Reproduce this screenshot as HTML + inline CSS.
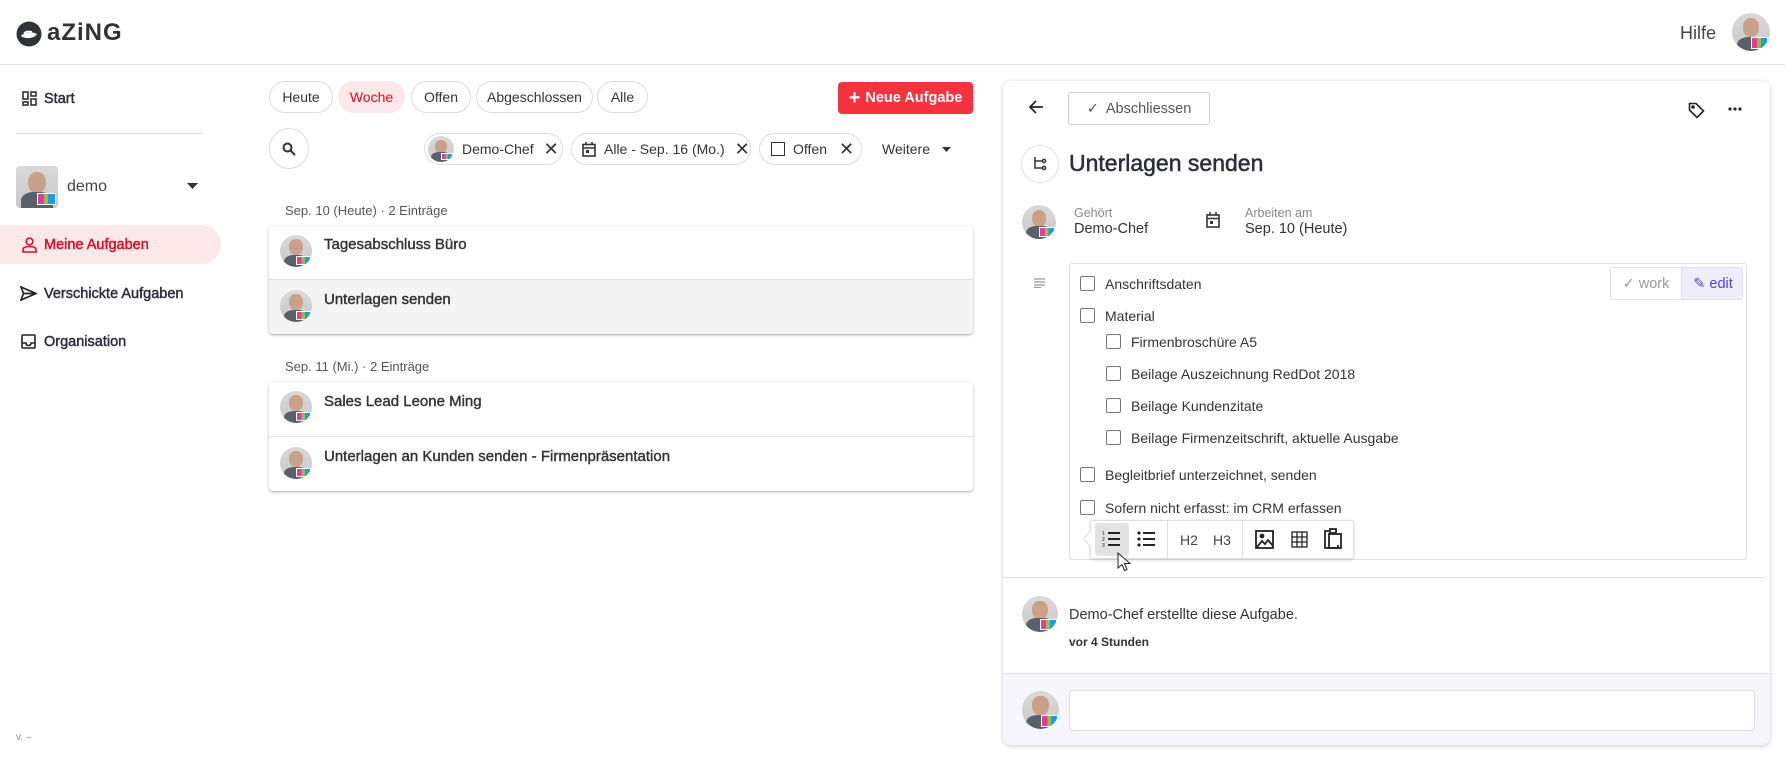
<!DOCTYPE html>
<html><head><meta charset="utf-8">
<style>
*{box-sizing:border-box;margin:0;padding:0}
body{width:1785px;height:757px;overflow:hidden;background:#fff;font-family:"Liberation Sans",sans-serif;color:#2b2d3b;position:relative}
.a{position:absolute}
.t{position:absolute;white-space:nowrap;line-height:1}
.chip{position:absolute;border:1px solid #dcdcdc;border-radius:16px;font-size:14px;display:flex;align-items:center;justify-content:center;color:#333;background:#fff}
.av{position:absolute;border-radius:50%;overflow:hidden;background:linear-gradient(180deg,#d9d9d9 0%,#c9c9c9 100%)}
.av:before{content:"";position:absolute;left:28%;top:14%;width:44%;height:50%;border-radius:45%;background:#c9a189}
.av:after{content:"";position:absolute;left:12%;top:62%;width:76%;height:50%;border-radius:40% 40% 0 0;background:#59606a}
.av i{position:absolute;right:4%;bottom:6%;width:45%;height:30%;background:linear-gradient(90deg,#e0408f 0 35%,#8bc34a 35% 60%,#2196f3 60%);z-index:2;border:1px solid #fff}
.cb{position:absolute;width:15px;height:15px;border:1.6px solid #777;border-radius:2px}
.it{position:absolute;font-size:14px;white-space:nowrap;line-height:1;color:#333}
.nav{position:absolute;font-size:14.5px;line-height:1;white-space:nowrap;color:#2b2d3b;-webkit-text-stroke:0.45px #2b2d3b}
.ttl{position:absolute;white-space:nowrap;line-height:1;font-size:15px;color:#333;-webkit-text-stroke:0.4px #333}
</style></head><body>

<!-- header -->
<svg class="a" style="left:16px;top:21px" width="26" height="26" viewBox="0 0 26 26"><circle cx="13" cy="13" r="12.5" fill="#2f3338"/><path d="M5 15c3-4 10-5 16-2c-2 4-11 6-16 2z" fill="#fff"/><path d="M8 12c2-2 6-2 8-1" stroke="#fff" stroke-width="1.5" fill="none"/></svg>
<div class="t" style="left:47px;top:21px;font-size:24px;font-weight:bold;color:#2f3338;letter-spacing:1px">aZiNG</div>
<div class="t" style="left:1680px;top:24px;font-size:18px;color:#444">Hilfe</div>
<div class="av" style="left:1732px;top:13px;width:38px;height:38px"><i></i></div>
<div class="a" style="left:0;top:64px;width:1785px;height:1px;background:#e2e2e2"></div>

<!-- sidebar -->
<svg class="a" style="left:22px;top:91px" width="15" height="15" viewBox="0 0 15 15" fill="none" stroke="#333" stroke-width="1.6"><rect x="1" y="1" width="5" height="7"/><rect x="9" y="1" width="5" height="4"/><rect x="1" y="11" width="5" height="3"/><rect x="9" y="8" width="5" height="6"/></svg>
<div class="nav" style="left:44px;top:92px">Start</div>
<div class="a" style="left:16px;top:133px;width:187px;height:1px;background:#ddd"></div>
<div class="a" style="left:16px;top:166px;width:42px;height:42px;background:#e8e4ef;border-radius:4px;overflow:hidden"><div class="av" style="left:0;top:0;width:42px;height:42px;border-radius:4px"><i></i></div></div>
<div class="t" style="left:67px;top:179px;font-size:16px;color:#444">demo</div>
<svg class="a" style="left:187px;top:183px" width="11" height="6"><path d="M0 0h11L5.5 6z" fill="#333"/></svg>
<div class="a" style="left:0;top:225px;width:221px;height:39px;background:#fde8e9;border-radius:0 20px 20px 0"></div>
<svg class="a" style="left:22px;top:237px" width="15" height="16" viewBox="0 0 15 16" fill="none" stroke="#d0112b" stroke-width="1.6"><circle cx="7.5" cy="4.5" r="3.3"/><path d="M1 15v-2c0-2.5 2-3.5 6.5-3.5s6.5 1 6.5 3.5v2z"/></svg>
<div class="nav" style="left:44px;top:238px;color:#d0112b;-webkit-text-stroke-color:#d0112b">Meine Aufgaben</div>
<svg class="a" style="left:20px;top:286px" width="17" height="15" viewBox="0 0 17 15" fill="none" stroke="#222" stroke-width="1.7"><path d="M1 1l15 6.5L1 14l2.5-6.5z M3.5 7.5H16"/></svg>
<div class="nav" style="left:44px;top:287px">Verschickte Aufgaben</div>
<svg class="a" style="left:21px;top:334px" width="15" height="15" viewBox="0 0 15 15" fill="none" stroke="#222" stroke-width="1.6"><rect x="1" y="1" width="13" height="13" rx="1"/><path d="M1 9h4c0 2 1 2.5 2.5 2.5S10 11 10 9h4"/></svg>
<div class="nav" style="left:44px;top:335px">Organisation</div>
<div class="t" style="left:16px;top:733px;font-size:10px;color:#888">v. –</div>

<!-- filter chips -->
<div class="chip" style="left:269px;top:81px;width:64px;height:32px">Heute</div>
<div class="chip" style="left:338px;top:81px;width:67px;height:32px;background:#fde8e9;border-color:#fde8e9;color:#d0112b">Woche</div>
<div class="chip" style="left:411px;top:81px;width:60px;height:32px">Offen</div>
<div class="chip" style="left:476px;top:81px;width:117px;height:32px">Abgeschlossen</div>
<div class="chip" style="left:597px;top:81px;width:51px;height:32px">Alle</div>
<div class="a" style="left:838px;top:82px;width:135px;height:32px;background:#f5333f;border-radius:4px;color:#fff;font-weight:bold;font-size:14.5px;display:flex;align-items:center;justify-content:center"><span style="font-size:20px;margin-right:5px;line-height:1">+</span>Neue Aufgabe</div>

<div class="chip" style="left:269px;top:128px;width:40px;height:41px;border-radius:50%"><svg width="14" height="14" viewBox="0 0 14 14" fill="none" stroke="#333" stroke-width="2"><circle cx="5.5" cy="5.5" r="4"/><path d="M8.5 8.5L13 13"/></svg></div>
<div class="chip" style="left:424px;top:133px;width:139px;height:32px;justify-content:flex-start;padding-left:3px"><div class="av" style="position:relative;width:26px;height:26px"><i></i></div><span style="margin-left:8px">Demo-Chef</span><span style="margin-left:10px;font-size:18px">✕</span></div>
<div class="chip" style="left:571px;top:133px;width:180px;height:32px;justify-content:flex-start;padding-left:10px"><svg width="14" height="15" viewBox="0 0 14 15" fill="none" stroke="#333" stroke-width="1.6"><rect x="1" y="2.5" width="12" height="11.5"/><path d="M1 6h12M4 0v3M10 0v3"/><rect x="4" y="8" width="3" height="3" fill="#333" stroke="none"/></svg><span style="margin-left:8px">Alle - Sep. 16 (Mo.)</span><span style="margin-left:10px;font-size:18px">✕</span></div>
<div class="chip" style="left:759px;top:133px;width:103px;height:32px;justify-content:flex-start;padding-left:11px"><span style="width:14px;height:14px;border:1.8px solid #333;display:inline-block"></span><span style="margin-left:8px">Offen</span><span style="margin-left:12px;font-size:18px">✕</span></div>
<div class="t" style="left:882px;top:142px;font-size:14px;color:#333">Weitere</div>
<svg class="a" style="left:942px;top:147px" width="9" height="5"><path d="M0 0h9L4.5 5z" fill="#333"/></svg>

<!-- lists -->
<div class="t" style="left:285px;top:204px;font-size:13px;color:#555">Sep. 10 (Heute) · 2 Einträge</div>
<div class="a" style="left:269px;top:226px;width:704px;height:108px;border-radius:4px;box-shadow:0 1px 3px rgba(0,0,0,.25),0 1px 1px rgba(0,0,0,.1);overflow:hidden;background:#fff">
 <div class="a" style="left:0;top:53px;width:704px;height:55px;background:#f4f4f4;border-top:1px solid #e0e0e0"></div>
</div>
<div class="av" style="left:280px;top:235px;width:32px;height:32px"><i></i></div>
<div class="ttl" style="left:324px;top:237px">Tagesabschluss Büro</div>
<div class="av" style="left:280px;top:290px;width:32px;height:32px"><i></i></div>
<div class="ttl" style="left:324px;top:292px">Unterlagen senden</div>

<div class="t" style="left:285px;top:360px;font-size:13px;color:#555">Sep. 11 (Mi.) · 2 Einträge</div>
<div class="a" style="left:269px;top:382px;width:704px;height:109px;border-radius:4px;box-shadow:0 1px 3px rgba(0,0,0,.25),0 1px 1px rgba(0,0,0,.1);background:#fff">
 <div class="a" style="left:0;top:54px;width:704px;height:1px;background:#e0e0e0"></div>
</div>
<div class="av" style="left:280px;top:391px;width:32px;height:32px"><i></i></div>
<div class="ttl" style="left:324px;top:394px">Sales Lead Leone Ming</div>
<div class="av" style="left:280px;top:447px;width:32px;height:32px"><i></i></div>
<div class="ttl" style="left:324px;top:449px">Unterlagen an Kunden senden - Firmenpräsentation</div>

<!-- panel -->
<div class="a" style="left:1003px;top:81px;width:767px;height:664px;border-radius:8px;background:#fff;box-shadow:0 1px 5px rgba(0,0,0,.22);overflow:hidden">
 <div class="a" style="left:0;top:592px;width:767px;height:72px;background:#f7f6fc;border-top:1px solid #e4e4e4"></div>
 <div class="a" style="left:0;top:496px;width:762px;height:1px;background:#e2e2e2"></div>
</div>
<svg class="a" style="left:1029px;top:100px" width="15" height="14" viewBox="0 0 15 14" fill="none" stroke="#222" stroke-width="1.7"><path d="M14 7H2M7 1L1 7l6 6"/></svg>
<div class="a" style="left:1068px;top:92px;width:142px;height:33px;border:1px solid #ccc;border-radius:3px;font-size:14.5px;color:#555;display:flex;align-items:center;justify-content:center"><span style="margin-right:7px">✓</span>Abschliessen</div>
<svg class="a" style="left:1688px;top:102px" width="17" height="17" viewBox="0 0 17 17" fill="none" stroke="#222" stroke-width="1.6"><path d="M1.5 1.5h6.5l7.5 7.5-6.5 6.5L1.5 8z"/><circle cx="5" cy="5" r="1" fill="#222"/></svg>
<svg class="a" style="left:1728px;top:107px" width="14" height="4"><circle cx="2" cy="2" r="1.6" fill="#222"/><circle cx="7" cy="2" r="1.6" fill="#222"/><circle cx="12" cy="2" r="1.6" fill="#222"/></svg>
<div class="a" style="left:1021px;top:145px;width:38px;height:38px;border:1px solid #e3e3e3;border-radius:50%"></div>
<svg class="a" style="left:1033px;top:156px" width="14" height="16" viewBox="0 0 14 16" fill="none" stroke="#333" stroke-width="1.5"><path d="M2 1v11h7M2 5h7"/><circle cx="11" cy="5" r="1.6"/><circle cx="11" cy="12" r="1.6"/></svg>
<div class="t" style="left:1069px;top:152px;font-size:23px;color:#2b2d3b;-webkit-text-stroke:0.5px #2b2d3b">Unterlagen senden</div>

<div class="av" style="left:1022px;top:205px;width:34px;height:34px"><i></i></div>
<div class="t" style="left:1074px;top:207px;font-size:12.5px;color:#888">Gehört</div>
<div class="t" style="left:1074px;top:222px;font-size:14.5px;color:#333">Demo-Chef</div>
<svg class="a" style="left:1206px;top:212px" width="14" height="16" viewBox="0 0 14 16" fill="none" stroke="#333" stroke-width="1.6"><rect x="1" y="3" width="12" height="12"/><path d="M1 6.5h12M4 0v3M10 0v3"/><rect x="4" y="9" width="3" height="3" fill="#333" stroke="none"/></svg>
<div class="t" style="left:1245px;top:207px;font-size:12.5px;color:#888">Arbeiten am</div>
<div class="t" style="left:1245px;top:222px;font-size:14.5px;color:#333">Sep. 10 (Heute)</div>

<svg class="a" style="left:1034px;top:278px" width="11" height="10" viewBox="0 0 11 10" stroke="#999" stroke-width="1.3"><path d="M0 1h11M0 4h11M0 7h11M0 9.5h7"/></svg>
<div class="a" style="left:1069px;top:263px;width:678px;height:297px;border:1px solid #e0e0e0;border-radius:3px"></div>
<div class="a" style="left:1610px;top:267px;width:133px;height:33px;border:1px solid #e2e2e2;border-radius:3px;overflow:hidden;font-size:14.5px">
 <div class="a" style="left:0;top:0;width:70px;height:31px;display:flex;align-items:center;justify-content:center;color:#999">✓ work</div>
 <div class="a" style="left:70px;top:0;width:63px;height:31px;background:#efedfa;border-left:1px solid #e2e2e2;display:flex;align-items:center;justify-content:center;color:#5a3fd3">✎ edit</div>
</div>

<div class="cb" style="left:1080px;top:276px"></div><div class="it" style="left:1105px;top:277px">Anschriftsdaten</div>
<div class="cb" style="left:1080px;top:308px"></div><div class="it" style="left:1105px;top:309px">Material</div>
<div class="cb" style="left:1106px;top:334px"></div><div class="it" style="left:1131px;top:335px">Firmenbroschüre A5</div>
<div class="cb" style="left:1106px;top:366px"></div><div class="it" style="left:1131px;top:367px">Beilage Auszeichnung RedDot 2018</div>
<div class="cb" style="left:1106px;top:398px"></div><div class="it" style="left:1131px;top:399px">Beilage Kundenzitate</div>
<div class="cb" style="left:1106px;top:430px"></div><div class="it" style="left:1131px;top:431px">Beilage Firmenzeitschrift, aktuelle Ausgabe</div>
<div class="cb" style="left:1080px;top:467px"></div><div class="it" style="left:1105px;top:468px">Begleitbrief unterzeichnet, senden</div>
<div class="cb" style="left:1080px;top:500px"></div><div class="it" style="left:1105px;top:501px">Sofern nicht erfasst: im CRM erfassen</div>

<!-- toolbar -->
<div class="a" style="left:1090px;top:520px;width:264px;height:39px;background:#fff;border:1px solid #ddd;border-radius:3px;box-shadow:0 1px 3px rgba(0,0,0,.15)">
 <div class="a" style="left:4px;top:2px;width:34px;height:33px;background:#e2e2e2;border-radius:3px"></div>
 <div class="a" style="left:76px;top:0;width:1px;height:37px;background:#ddd"></div>
 <div class="a" style="left:151px;top:0;width:1px;height:37px;background:#ddd"></div>
</div>
<svg class="a" style="left:1083px;top:530px" width="9" height="18"><path d="M8 0L1 9l7 9" fill="#fff" stroke="#ddd"/></svg>
<svg class="a" style="left:1102px;top:530px" width="18" height="18" viewBox="0 0 18 18" fill="#222"><rect x="6" y="2" width="12" height="2"/><rect x="6" y="8" width="12" height="2"/><rect x="6" y="14" width="12" height="2"/><text x="0" y="5" font-size="5" font-family="Liberation Sans">1</text><text x="0" y="11" font-size="5" font-family="Liberation Sans">2</text><text x="0" y="17" font-size="5" font-family="Liberation Sans">3</text></svg>
<svg class="a" style="left:1137px;top:530px" width="18" height="18" viewBox="0 0 18 18" fill="#222"><circle cx="2" cy="3" r="1.6"/><circle cx="2" cy="9" r="1.6"/><circle cx="2" cy="15" r="1.6"/><rect x="6" y="2" width="12" height="2"/><rect x="6" y="8" width="12" height="2"/><rect x="6" y="14" width="12" height="2"/></svg>
<div class="t" style="left:1180px;top:533px;font-size:14px;color:#444">H2</div>
<div class="t" style="left:1213px;top:533px;font-size:14px;color:#444">H3</div>
<svg class="a" style="left:1255px;top:530px" width="19" height="19" viewBox="0 0 19 19" fill="none" stroke="#222" stroke-width="1.8"><rect x="1" y="1" width="17" height="17"/><circle cx="7" cy="6" r="1.5" fill="#222"/><path d="M2 17l5-6 3 3 3-4 5 6"/></svg>
<svg class="a" style="left:1291px;top:531px" width="17" height="17" viewBox="0 0 17 17" fill="none" stroke="#222" stroke-width="1.3"><rect x="1" y="1" width="15" height="15"/><path d="M1 6h15M1 11h15M6 1v15M11 1v15"/></svg>
<svg class="a" style="left:1324px;top:528px" width="18" height="21" viewBox="0 0 18 21" fill="none" stroke="#222" stroke-width="1.8"><path d="M5 3H1v17h13v-3"/><rect x="5" y="6" width="12" height="14"/><rect x="6" y="1" width="6" height="4"/></svg>
<svg class="a" style="left:1117px;top:552px" width="14" height="20" viewBox="0 0 14 20"><path d="M1 1v15l4-3.5 2.5 6 2.5-1-2.5-6H13z" fill="#fff" stroke="#222" stroke-width="1"/></svg>

<!-- activity -->
<div class="av" style="left:1022px;top:596px;width:36px;height:36px"><i></i></div>
<div class="t" style="left:1069px;top:608px;font-size:14.5px;color:#333">Demo-Chef erstellte diese Aufgabe.</div>
<div class="t" style="left:1069px;top:636px;font-size:12px;font-weight:bold;color:#333">vor 4 Stunden</div>
<div class="av" style="left:1022px;top:691px;width:37px;height:38px"><i></i></div>
<div class="a" style="left:1069px;top:690px;width:686px;height:41px;background:#fff;border:1px solid #e0e0e0;border-radius:4px"></div>
</body></html>
